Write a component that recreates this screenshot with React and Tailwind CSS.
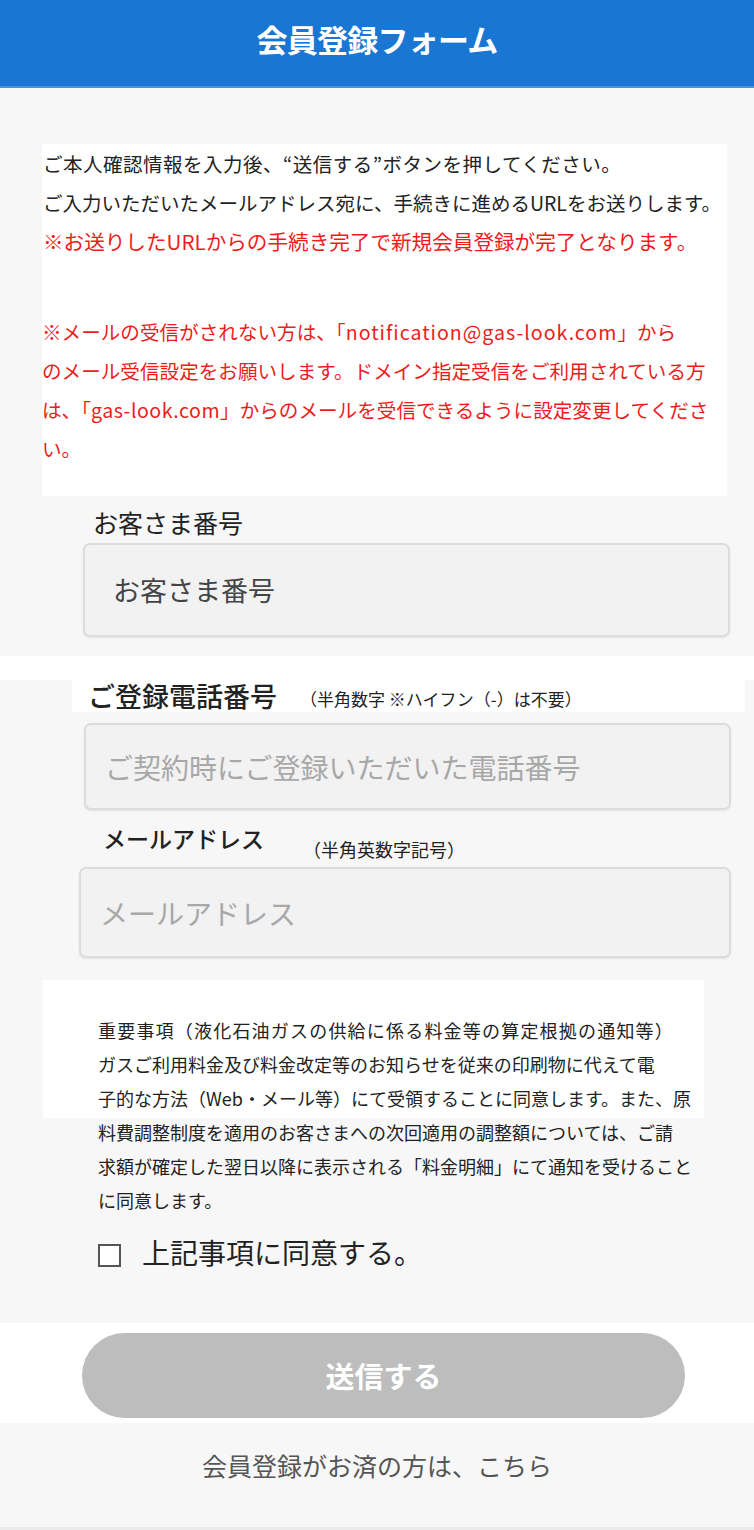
import React from 'react';

const font = "font-['Noto_Sans_CJK_JP','Noto_Sans',sans-serif]";

const Field = ({ children, className, textClass }) => (
  <div className={`bg-[#f2f2f2] border-2 border-[#dcdcdc] rounded-[7px] shadow-[0_1px_2px_rgba(0,0,0,0.08)] flex items-center ${className}`}>
    <span className={`whitespace-nowrap ${textClass}`}>{children}</span>
  </div>
);

export default function App() {
  return (
    <div className={`${font} bg-[#f7f7f7] w-[754px] min-h-[1530px] text-[#222]`}>
      {/* header */}
      <div className="h-[88px] bg-[#1976d2] border-b-2 border-[#4b91d6] flex items-center justify-center pb-[8px]">
        <h1 className="text-white text-[31px] font-bold tracking-tight">会員登録フォーム</h1>
      </div>

      {/* notes */}
      <div className="mt-[56px] ml-[42px] mr-[27px] bg-white pb-[28px] text-[19.5px] leading-[39px] whitespace-nowrap">
        <p className="text-[#222] pl-[1px] tracking-[0.5px]">ご本人確認情報を入力後、“送信する”ボタンを押してください。</p>
        <p className="text-[#222] pl-[1px]">ご入力いただいたメールアドレス宛に、手続きに進めるURLをお送りします。</p>
        <p className="text-[#ee1c1c] pl-[1px] text-[20.6px]">※お送りしたURLからの手続き完了で新規会員登録が完了となります。</p>
        <p className="text-[#ee1c1c] mt-[51px] text-[19.6px]">
          ※メールの受信がされない方は、「<span className="tracking-[1px]">notification@gas-look.com</span>」から<br />
          のメール受信設定をお願いします。ドメイン指定受信をご利用されている方<br />
          は、「<span className="tracking-[0.5px]">gas-look.com</span>」からのメールを受信できるように設定変更してくださ<br />
          い。
        </p>
      </div>

      {/* customer number */}
      <p className="mt-[11px] ml-[93px] text-[25px] leading-[30px] text-[#222]">お客さま番号</p>
      <Field className="mt-[6px] ml-[83px] w-[647px] h-[94px] pl-[28px]" textClass="text-[27px] text-[#444]">
        お客さま番号
      </Field>

      {/* phone */}
      <div className="mt-[19px] h-[24px] bg-white" />
      <div className="ml-[72px] mr-[9px] h-[32px] bg-white flex items-center">
        <span className="w-[228px] pl-[16px] text-[27px] font-medium leading-[32px] whitespace-nowrap">ご登録電話番号</span>
        <span className="text-[17px] text-[#222] whitespace-nowrap mt-[6px]">（半角数字 ※ハイフン（-）は不要）</span>
      </div>
      <Field className="mt-[11px] ml-[84px] w-[647px] h-[87px] pl-[19px]" textClass="text-[28px] text-[#a8a8a8]">
        ご契約時にご登録いただいた電話番号
      </Field>

      {/* email */}
      <div className="mt-[13px] ml-[103px] h-[30px] flex items-end">
        <span className="w-[200px] text-[23px] font-medium leading-[30px] whitespace-nowrap">メールアドレス</span>
        <span className="text-[18px] leading-[24px] whitespace-nowrap translate-y-[8px]">（半角英数字記号）</span>
      </div>
      <Field className="mt-[14px] ml-[79px] w-[652px] h-[91px] pl-[19px]" textClass="text-[28px] text-[#a8a8a8]">
        メールアドレス
      </Field>

      {/* notice */}
      <div className="mt-[22px] ml-[43px] w-[661px] pl-[55px] pt-[33px] bg-[linear-gradient(to_bottom,white_138px,transparent_138px)] text-[18px] leading-[34px] text-[#222] whitespace-nowrap">
        <span className="tracking-[1.2px]">重要事項（液化石油ガスの供給に係る料金等の算定根拠の通知等）</span><br />
        ガスご利用料金及び料金改定等のお知らせを従来の印刷物に代えて電<br />
        子的な方法（Web・メール等）にて受領することに同意します。また、原<br />
        料費調整制度を適用のお客さまへの次回適用の調整額については、ご請<br />
        求額が確定した翌日以降に表示される「料金明細」にて通知を受けること<br />
        に同意します。
      </div>

      {/* agree */}
      <label className="mt-[20px] ml-[98px] h-[30px] flex items-center gap-[21px]">
        <span className="w-[23px] h-[23px] border-2 border-[#555] bg-white mt-[6px]" />
        <span className="text-[28px] leading-[30px] text-[#222]">上記事項に同意する。</span>
      </label>

      {/* submit */}
      <div className="mt-[56px] bg-white pt-[10px] pb-[5px]">
        <button className="ml-[82px] w-[603px] h-[85px] rounded-full bg-[#bdbdbd] text-white text-[29px] font-bold">
          送信する
        </button>
      </div>

      <p className="mt-[27px] text-center text-[25px] leading-[30px] text-[#555]">会員登録がお済の方は、こちら</p>
      <div className="mt-[47px] h-[3px] bg-[#ebebeb]" />
    </div>
  );
}
